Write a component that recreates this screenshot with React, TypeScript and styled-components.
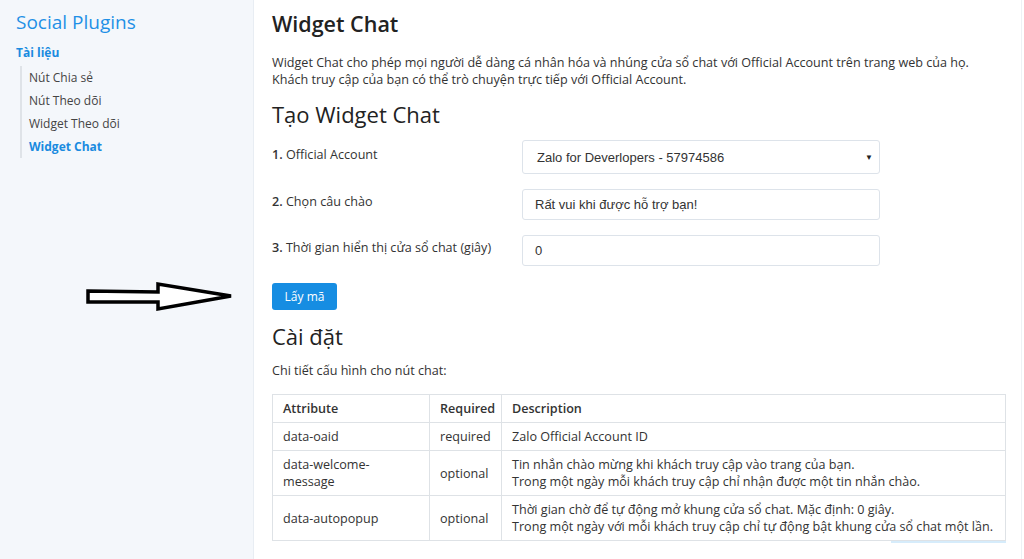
import React from 'react';
import styled, { createGlobalStyle } from 'styled-components';

const GlobalStyle = createGlobalStyle`
  html, body {
    margin: 0;
    padding: 0;
    background: #ffffff;
  }
  body {
    font-family: 'Open Sans', 'Noto Sans', sans-serif;
    color: #333333;
  }
`;

type Row = {
  attribute: string;
  required: string;
  description: string[];
};

const rows: Row[] = [
  {
    attribute: 'data-oaid',
    required: 'required',
    description: ['Zalo Official Account ID'],
  },
  {
    attribute: 'data-welcome-message',
    required: 'optional',
    description: [
      'Tin nhắn chào mừng khi khách truy cập vào trang của bạn.',
      'Trong một ngày mỗi khách truy cập chỉ nhận được một tin nhắn chào.',
    ],
  },
  {
    attribute: 'data-autopopup',
    required: 'optional',
    description: [
      'Thời gian chờ để tự động mở khung cửa sổ chat. Mặc định: 0 giây.',
      'Trong một ngày với mỗi khách truy cập chỉ tự động bật khung cửa sổ chat một lần.',
    ],
  },
];

const navItems = ['Nút Chia sẻ', 'Nút Theo dõi', 'Widget Theo dõi', 'Widget Chat'];

function Arrow(): JSX.Element {
  return (
    <svg width="150" height="32" viewBox="0 0 150 32">
      <path
        d="M3 10 L73 11 L73 3 L146 15 L73 28 L73 21 L3 21 Z"
        fill="#ffffff"
        stroke="#000000"
        strokeWidth="3.5"
        strokeLinejoin="miter"
      />
    </svg>
  );
}

export default function App(): JSX.Element {
  return (
    <Page>
      <GlobalStyle />
      <Sidebar>
        <SideTitle>Social Plugins</SideTitle>
        <SideSection>Tài liệu</SideSection>
        <NavList>
          {navItems.map((item) => (
            <NavItem key={item} active={item === 'Widget Chat'}>
              {item}
            </NavItem>
          ))}
        </NavList>
        <ArrowSpot>
          <Arrow />
        </ArrowSpot>
      </Sidebar>

      <Main>
        <PageTitle>Widget Chat</PageTitle>
        <Intro>
          Widget Chat cho phép mọi người dễ dàng cá nhân hóa và nhúng cửa sổ chat với Official Account trên trang web của họ.
          <br />
          Khách truy cập của bạn có thể trò chuyện trực tiếp với Official Account.
        </Intro>

        <SectionTitle>Tạo Widget Chat</SectionTitle>
        <Form>
          <FormRow>
            <Label>
              <b>1.</b> Official Account
            </Label>
            <SelectBox>
              <span>Zalo for Deverlopers - 57974586</span>
              <Caret>▼</Caret>
            </SelectBox>
          </FormRow>
          <FormRow>
            <Label>
              <b>2.</b> Chọn câu chào
            </Label>
            <InputBox>Rất vui khi được hỗ trợ bạn!</InputBox>
          </FormRow>
          <FormRow>
            <Label>
              <b>3.</b> Thời gian hiển thị cửa sổ chat (giây)
            </Label>
            <InputBox>0</InputBox>
          </FormRow>
        </Form>
        <Button>Lấy mã</Button>

        <SectionTitle>Cài đặt</SectionTitle>
        <Note>Chi tiết cấu hình cho nút chat:</Note>

        <TableWrap>
          <Table>
            <thead>
              <tr>
                <Th width={132}>Attribute</Th>
                <Th width={55}>Required</Th>
                <Th>Description</Th>
              </tr>
            </thead>
            <tbody>
              {rows.map((row) => (
                <tr key={row.attribute}>
                  <Td>{row.attribute}</Td>
                  <Td>{row.required}</Td>
                  <Td>
                    {row.description.map((line) => (
                      <div key={line}>{line}</div>
                    ))}
                  </Td>
                </tr>
              ))}
            </tbody>
          </Table>
          <Underline />
        </TableWrap>
      </Main>
    </Page>
  );
}

const Page = styled.div`
  display: flex;
  width: 1024px;
  height: 559px;
  overflow: hidden;
`;

const Sidebar = styled.aside`
  position: relative;
  width: 254px;
  flex-shrink: 0;
  background: #f4f7fb;
  border-right: 1px solid #e8edf3;
  box-sizing: border-box;
  padding: 9px 0 0 16px;
`;

const SideTitle = styled.div`
  font-size: 19px;
  color: #1f90e6;
  line-height: 26px;
`;

const SideSection = styled.div`
  margin-top: 10px;
  font-size: 12px;
  font-weight: 700;
  color: #1a8be0;
  line-height: 16px;
`;

const NavList = styled.ul`
  list-style: none;
  margin: 5px 0 0 4px;
  padding: 0 0 0 7px;
  border-left: 2px solid #dfe3e8;
`;

const NavItem = styled.li<{ active?: boolean }>`
  font-size: 12px;
  line-height: 23px;
  color: ${({ active }) => (active ? '#1a8be0' : '#444444')};
  font-weight: ${({ active }) => (active ? 700 : 400)};
`;

const ArrowSpot = styled.div`
  position: absolute;
  left: 85px;
  top: 281px;
`;

const Main = styled.main`
  flex: 1;
  padding: 8px 0 0 18px;
  box-sizing: border-box;
  border-right: 1px solid #eef1f5;
  margin-right: 2px;
`;

const PageTitle = styled.h1`
  margin: 0;
  font-size: 21.5px;
  font-weight: 600;
  color: #222222;
  line-height: 32px;
`;

const Intro = styled.p`
  margin: 14px 0 0;
  font-size: 12.6px;
  line-height: 17px;
  color: #333333;
  width: 740px;
`;

const SectionTitle = styled.h2`
  margin: 10px 0 0;
  font-size: 22px;
  font-weight: 400;
  color: #222222;
  line-height: 32px;
`;

const Form = styled.div`
  display: flex;
  flex-direction: column;
  gap: 15px;
  margin-top: 10px;
`;

const FormRow = styled.div`
  display: grid;
  grid-template-columns: 250px 358px;
  align-items: center;
`;

const Label = styled.div`
  font-size: 12.6px;
  color: #333333;
  padding-bottom: 6px;

  b {
    font-weight: 600;
  }
`;

const InputBox = styled.div`
  height: 31px;
  box-sizing: border-box;
  border: 1px solid #dde3ea;
  border-radius: 3px;
  padding: 0 12px;
  display: flex;
  align-items: center;
  font-family: 'Liberation Sans', Arial, sans-serif;
  font-size: 13px;
  color: #333333;
`;

const SelectBox = styled(InputBox)`
  height: 34px;
  padding: 0 6px 0 14px;
  justify-content: space-between;
`;

const Caret = styled.span`
  font-size: 8px;
  color: #222222;
`;

const Button = styled.button`
  margin-top: 17px;
  width: 65px;
  height: 27px;
  border: none;
  border-radius: 3px;
  background: #168de2;
  color: #ffffff;
  font-family: 'Open Sans', sans-serif;
  font-size: 12px;
  padding: 0;
`;

const Note = styled.p`
  margin: 10px 0 0;
  font-size: 12.6px;
  line-height: 18px;
  color: #333333;
`;

const TableWrap = styled.div`
  margin-top: 14px;
  width: 734px;
  display: flex;
  flex-direction: column;
  align-items: flex-end;
`;

const Table = styled.table`
  width: 734px;
  border-collapse: collapse;
  table-layout: fixed;
  font-size: 12.6px;
  color: #333333;

  th:first-child,
  td:first-child {
    padding-right: 14px;
  }
`;

const Underline = styled.div`
  width: 115px;
  height: 2px;
  background: #d6ecfb;
`;

const Th = styled.th<{ width?: number }>`
  text-align: left;
  font-weight: 600;
  padding: 5px 6px 5px 10px;
  line-height: 17px;
  border: 1px solid #dee2e6;
  width: ${({ width }) => (width ? `${width}px` : 'auto')};
`;

const Td = styled.td`
  padding: 5px 6px 5px 10px;
  line-height: 17px;
  border: 1px solid #dee2e6;
  vertical-align: middle;
`;
